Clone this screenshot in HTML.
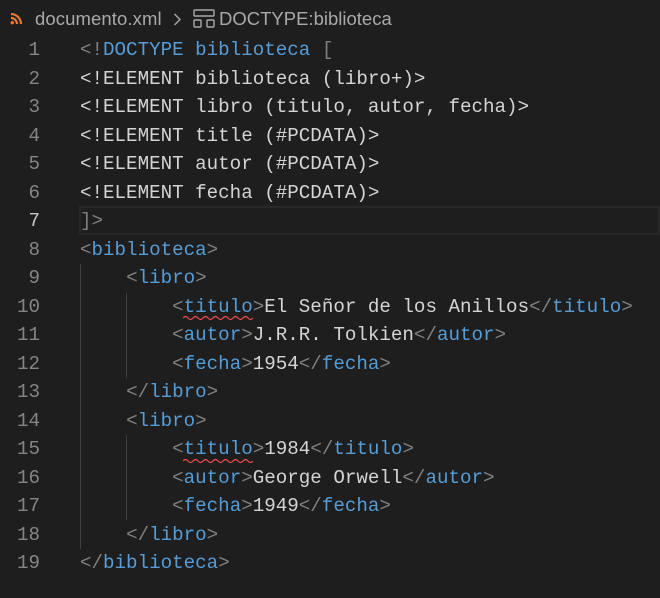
<!DOCTYPE html>
<html><head><meta charset="utf-8">
<style>
html,body{margin:0;padding:0;background:#1e1e1e;width:660px;height:598px;overflow:hidden}
.bc{position:absolute;top:0;left:0;height:36px;width:660px;font-family:"Liberation Sans",sans-serif;font-size:18.5px;color:#a9a9a9}
.bc span{position:absolute;top:8px;white-space:nowrap}
.ln{position:absolute;left:0;width:40px;text-align:right;font-family:"Liberation Mono",monospace;font-size:19.2px;color:#858585;line-height:28.5px}
.code{position:absolute;left:80px;font-family:"Liberation Mono",monospace;font-size:19.2px;color:#d4d4d4;white-space:pre;line-height:28.5px}
.g{color:#808080}.b{color:#569cd6}
.guide{position:absolute;width:1px;background:#404040}
</style></head><body>
<div class="bc">
<svg style="position:absolute;left:10px;top:12px" width="13" height="13" viewBox="0 0 13 13">
<path d="M1 2 A10 10 0 0 1 11 12" stroke="#e37933" stroke-width="2.2" fill="none"/>
<path d="M1 6 A6 6 0 0 1 7 12" stroke="#e37933" stroke-width="2.2" fill="none"/>
<circle cx="2.3" cy="10.7" r="1.7" fill="#e37933"/></svg>
<span style="left:35px;letter-spacing:0.1px">documento.xml</span>
<svg style="position:absolute;left:173px;top:13px" width="9" height="13" viewBox="0 0 9 13"><path d="M1.5 1 L7 6.5 L1.5 12" stroke="#a9a9a9" stroke-width="1.4" fill="none"/></svg>
<svg style="position:absolute;left:193px;top:9px" width="22" height="19" viewBox="0 0 22 19" fill="none" stroke="#a9a9a9" stroke-width="1.4">
<rect x="1" y="1" width="20" height="6" rx="1"/><rect x="1" y="11" width="7" height="7" rx="1"/><rect x="14" y="11" width="7" height="7" rx="1"/></svg>
<span style="left:219px">DOCTYPE:biblioteca</span>
</div>
<div style="position:absolute;left:79px;top:206px;width:581px;height:29px;box-sizing:border-box;border:2px solid #282828"></div>
<div class="guide" style="left:80px;top:264px;height:285px"></div>
<div class="guide" style="left:126px;top:293px;height:85px"></div>
<div class="guide" style="left:126px;top:435px;height:85px"></div>
<div class="ln" style="top:36px">1<br>2<br>3<br>4<br>5<br>6<br><span style="color:#c6c6c6">7</span><br>8<br>9<br>10<br>11<br>12<br>13<br>14<br>15<br>16<br>17<br>18<br>19</div>
<div class="code" style="top:36px"><span class="g">&lt;!</span><span class="b">DOCTYPE</span> <span class="b">biblioteca</span> <span class="g">[</span>
&lt;!ELEMENT biblioteca (libro+)&gt;
&lt;!ELEMENT libro (titulo, autor, fecha)&gt;
&lt;!ELEMENT title (#PCDATA)&gt;
&lt;!ELEMENT autor (#PCDATA)&gt;
&lt;!ELEMENT fecha (#PCDATA)&gt;
<span class="g">]&gt;</span>
<span class="g">&lt;</span><span class="b">biblioteca</span><span class="g">&gt;</span>
    <span class="g">&lt;</span><span class="b">libro</span><span class="g">&gt;</span>
        <span class="g">&lt;</span><span class="b">titulo</span><span class="g">&gt;</span>El Señor de los Anillos<span class="g">&lt;/</span><span class="b">titulo</span><span class="g">&gt;</span>
        <span class="g">&lt;</span><span class="b">autor</span><span class="g">&gt;</span>J.R.R. Tolkien<span class="g">&lt;/</span><span class="b">autor</span><span class="g">&gt;</span>
        <span class="g">&lt;</span><span class="b">fecha</span><span class="g">&gt;</span>1954<span class="g">&lt;/</span><span class="b">fecha</span><span class="g">&gt;</span>
    <span class="g">&lt;/</span><span class="b">libro</span><span class="g">&gt;</span>
    <span class="g">&lt;</span><span class="b">libro</span><span class="g">&gt;</span>
        <span class="g">&lt;</span><span class="b">titulo</span><span class="g">&gt;</span>1984<span class="g">&lt;/</span><span class="b">titulo</span><span class="g">&gt;</span>
        <span class="g">&lt;</span><span class="b">autor</span><span class="g">&gt;</span>George Orwell<span class="g">&lt;/</span><span class="b">autor</span><span class="g">&gt;</span>
        <span class="g">&lt;</span><span class="b">fecha</span><span class="g">&gt;</span>1949<span class="g">&lt;/</span><span class="b">fecha</span><span class="g">&gt;</span>
    <span class="g">&lt;/</span><span class="b">libro</span><span class="g">&gt;</span>
<span class="g">&lt;/</span><span class="b">biblioteca</span><span class="g">&gt;</span></div>
<svg style="position:absolute;left:183px;top:315px" width="70" height="6"><path d="M0 3 q2.5 -3 5 0 t5 0 t5 0 t5 0 t5 0 t5 0 t5 0 t5 0 t5 0 t5 0 t5 0 t5 0 t5 0 t5 0" stroke="#f14c4c" stroke-width="1.2" fill="none"/></svg>
<svg style="position:absolute;left:183px;top:458px" width="70" height="6"><path d="M0 3 q2.5 -3 5 0 t5 0 t5 0 t5 0 t5 0 t5 0 t5 0 t5 0 t5 0 t5 0 t5 0 t5 0 t5 0 t5 0" stroke="#f14c4c" stroke-width="1.2" fill="none"/></svg>
</body></html>
